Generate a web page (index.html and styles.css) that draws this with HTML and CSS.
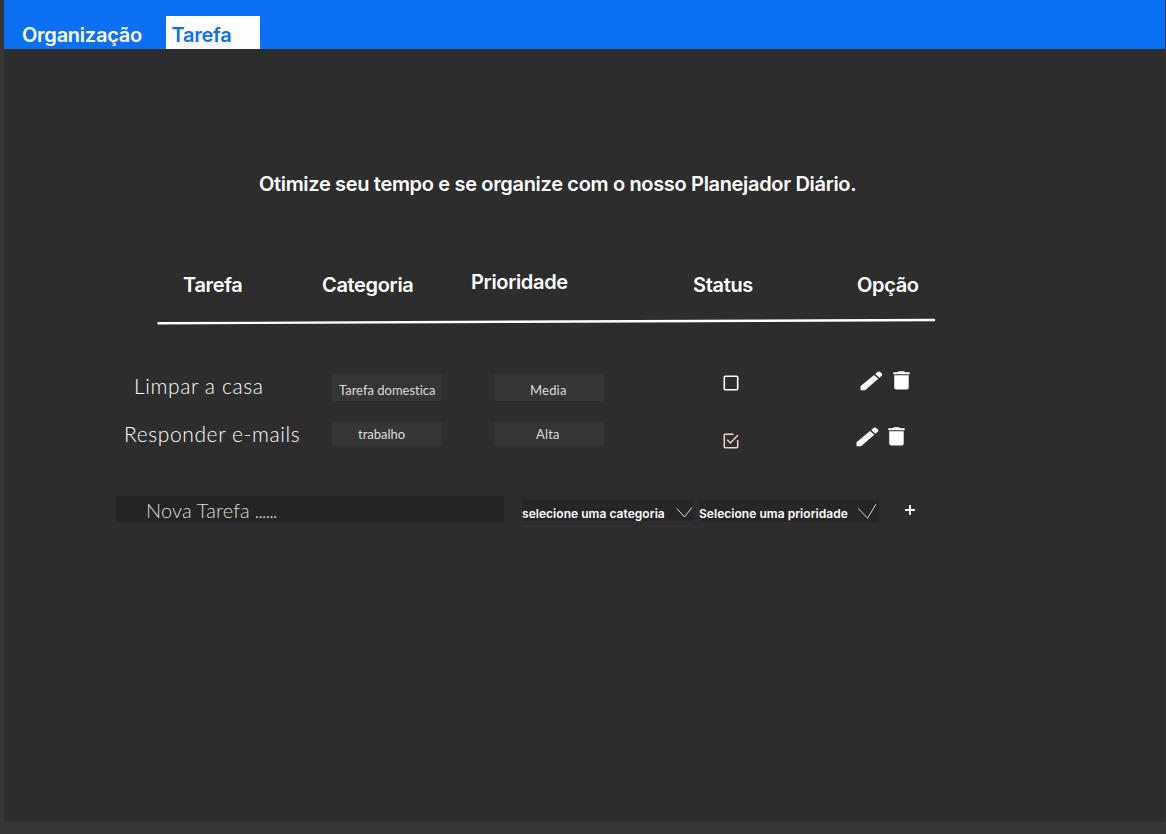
FILE: index.html
```html
<!DOCTYPE html>
<html lang="pt-BR">
<head>
<meta charset="utf-8">
<title>Planejador Diário</title>
<link rel="stylesheet" href="styles.css">
</head>
<body>
<svg width="0" height="0" class="defs">
  <symbol id="pencil" viewBox="0 0 23 20"><path d="M0.5 15.2L14 3.9L18.3 7.8L5 19.2H0.5Z"/><path d="M15.2 2.9L17.8 0.8Q18.9 0 20 0.8L22 2.7Q22.8 3.7 21.8 4.7L19.4 6.8Z"/></symbol>
  <symbol id="trash" viewBox="0 0 17 19"><path d="M0.3 1.2H4.6L5.8 0.2H11L12.2 1.2H16.7V3.2H0.3Z"/><path d="M1.2 4.3H15.7V16.5Q15.7 18.6 13.6 18.6H3.3Q1.2 18.6 1.2 16.5Z"/></symbol>
</svg>
<div class="page">
  <header class="nav">
    <span class="brand">Organização</span>
    <a class="tab">Tarefa</a>
  </header>
  <main>
    <h1>Otimize seu tempo e se organize com o nosso Planejador Diário.</h1>
    <div class="heads">
      <span class="h-task">Tarefa</span><span class="h-cat">Categoria</span><span class="h-pri">Prioridade</span><span class="h-status">Status</span><span class="h-opt">Opção</span>
    </div>
    <svg class="rule" width="779" height="8" viewBox="0 0 779 8"><path d="M0.5 5.3L778 2" stroke="#fff" stroke-width="2.4"/></svg>
    <div class="row first">
      <span class="name"><span class="n1">Limpar a casa</span></span>
      <span class="tag"><span class="t1">Tarefa domestica</span></span>
      <span class="tag"><span class="t2">Media</span></span>
      <svg class="check" width="16" height="16"><rect x="1.3" y="1.3" width="13.4" height="13.4" rx="1" fill="none" stroke="#fff" stroke-width="1.6"/></svg>
      <span class="actions"><svg width="23" height="20"><use href="#pencil"/></svg><svg class="bin" width="17" height="19"><use href="#trash"/></svg></span>
    </div>
    <div class="row second">
      <span class="name"><span class="n2">Responder e-mails</span></span>
      <span class="tag"><span class="t3">trabalho</span></span>
      <span class="tag"><span class="t4">Alta</span></span>
      <svg class="check" width="16" height="16" fill="none" stroke="#f5d0cd" stroke-width="1.5"><path d="M10.5 1.3H2Q1.3 1.3 1.3 2V14Q1.3 14.7 2 14.7H14Q14.7 14.7 14.7 14V7"/><path d="M4.2 6.7L7.4 10L14.8 2.2"/></svg>
      <span class="actions"><svg width="23" height="20"><use href="#pencil"/></svg><svg class="bin" width="17" height="19"><use href="#trash"/></svg></span>
    </div>
    <div class="form">
      <div class="field"><span class="placeholder">Nova Tarefa <span class="dots">......</span></span></div>
      <div class="select cat"><span class="s1">selecione uma categoria</span><svg width="17" height="21"><path d="M0.8 8.5L8.5 17L16 7.4"/></svg></div>
      <div class="select pri"><span class="s2">Selecione uma prioridade</span><svg width="21" height="22"><path d="M0 8.2L9.5 18.2L18 4.2"/></svg></div>
      <svg class="plus" width="10" height="10"><path d="M5 0V10M0 5H10"/></svg>
    </div>
  </main>
</div>
</body>
</html>
```
FILE: styles.css
```css
* { box-sizing: border-box; }
body { margin: 0; height: 834px; overflow: hidden; background: #363636; color: #fff; font-family: Inter, sans-serif; }
svg { display: block; flex: none; }
span, a, h1 { white-space: nowrap; }
.defs { position: absolute; }
.page { width: 1161px; height: 822px; margin-left: 4px; background: #2d2d2d; }
.nav { display: flex; height: 49px; padding: 16px 0 0 18px; background: #0b70f3; font-size: 20px; font-weight: 600; line-height: 38px; letter-spacing: -0.25px; }
.brand { width: 143.5px; }
.tab { width: 94px; height: 33px; padding-left: 6px; background: #fff; color: #0b70f3; line-height: 39px; }
main { display: flow-root; }
h1 { margin: 123px 0 0 255px; font-size: 20px; font-weight: 600; line-height: 24px; letter-spacing: -0.33px; }
.heads { display: grid; grid-template-columns: 139px 149px 222px 164px 100px; margin: 76.5px 0 0 179px; height: 24px; font-size: 20px; font-weight: 600; line-height: 24px; letter-spacing: -0.33px; }
.h-pri { margin-top: -3px; }
.rule { margin: 21.5px 0 0 153px; }
.row { display: grid; grid-template-columns: 217px 162px 229px 137px 60px; align-items: start; margin-left: 111px; font-family: Lato, sans-serif; font-variant-ligatures: none; }
.first { height: 27px; margin-top: 48px; }
.second { height: 24px; margin-top: 21px; }
.name { font-size: 21px; line-height: 24px; letter-spacing: 0.3px; font-weight: 300; }
.n1 { margin-left: 19px; letter-spacing: 0.6px; }
.n2 { margin-left: 9px; letter-spacing: 0.6px; }
.tag { width: 110px; height: 24px; background: #353535; font-size: 13px; line-height: 25px; color: #dedede; }
.first .tag { height: 27px; line-height: 32px; }
.t1 { margin-left: 7px; }
.t2 { margin-left: 36px; letter-spacing: 0.2px; }
.t3 { margin-left: 26px; }
.t4 { margin-left: 42px; letter-spacing: 0.2px; }
.check { margin-top: 1px; }
.second .check { margin-top: 11px; }
.actions { display: flex; gap: 10px; margin-top: -3px; fill: #fff; }
.second .actions { margin: 5px 0 0 -4px; gap: 8.5px; }
.form { display: flex; height: 26px; margin: 50px 0 0 112px; }
.field { width: 388px; height: 26px; padding-left: 30px; background: #242424; font: 300 20px/28px Lato, sans-serif; letter-spacing: 0.15px; color: #ddd; }
.dots { margin-left: -1px; letter-spacing: -1px; }
.select { display: flex; justify-content: space-between; margin-top: 4px; background: #262626; font-size: 12px; font-weight: 600; line-height: 27px; letter-spacing: 0.04px; }
.select path { fill: none; stroke: #ddd; stroke-width: 1; }
.cat { width: 171px; height: 21px; margin-left: 18px; }
.pri { width: 180px; height: 22px; margin-left: 6px; }
.plus { margin: 9px 0 0 26px; stroke: #fff; stroke-width: 1.8; }
```
